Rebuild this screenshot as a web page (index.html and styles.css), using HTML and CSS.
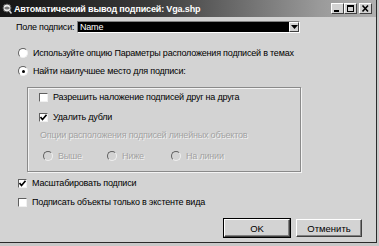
FILE: index.html
```html
<!DOCTYPE html>
<html lang="ru">
<head>
  <meta charset="UTF-8">
  <title>Автоматический вывод подписей: Vga.shp</title>
  <link rel="stylesheet" href="styles.css">
</head>
<body>

  <div class="window">
    <!-- title bar -->
    <div class="titlebar">
      <svg class="app-icon" width="10" height="11" viewBox="0 0 10 11">
        <circle cx="5" cy="5" r="4" fill="#e8e8e8" stroke="#555" stroke-width="1"/>
        <path d="M2 5 Q5 2 8 5 Q5 8 2 5" fill="#777"/>
        <line x1="7.5" y1="8" x2="9.5" y2="10.5" stroke="#ddd" stroke-width="1.5"/>
      </svg>
      <span class="title">Автоматический вывод подписей: Vga.shp</span>
      <div class="caption-btns">
        <span class="cap-btn"><svg width="11" height="9" viewBox="0 0 11 9"><rect x="2" y="6" width="5" height="2" fill="#000"/></svg></span>
        <span class="cap-btn"><svg width="11" height="9" viewBox="0 0 11 9"><rect x="2.5" y="1.5" width="6" height="6" fill="none" stroke="#000"/><rect x="2" y="1" width="7" height="2" fill="#000"/></svg></span>
        <span class="cap-btn close"><svg width="11" height="9" viewBox="0 0 11 9"><path d="M2.5 1.5 L8 7.5 M8 1.5 L2.5 7.5" stroke="#000" stroke-width="1.6"/></svg></span>
      </div>
    </div>

    <div class="content">
      <div class="field-row">
        <span class="field-label">Поле подписи:</span>
        <div class="combo">
          <span class="combo-value">Name</span>
          <span class="combo-arrow"><svg width="7" height="4" viewBox="0 0 7 4"><path d="M0 0 H7 L3.5 4 Z" fill="#000"/></svg></span>
        </div>
      </div>

      <div class="row radio-row first">
        <span class="radio"></span>
        <span>Используйте опцию Параметры расположения подписей в темах</span>
      </div>
      <div class="row radio-row second">
        <span class="radio on"></span>
        <span>Найти наилучшее место для подписи:</span>
      </div>

      <div class="group">
        <div class="row">
          <span class="check"></span>
          <span>Разрешить наложение подписей друг на друга</span>
        </div>
        <div class="row gap8">
          <span class="check on"><svg width="7" height="7" viewBox="0 0 7 7"><path d="M0.5 3 L2.5 5.5 L6.5 0.8" fill="none" stroke="#000" stroke-width="1.6"/></svg></span>
          <span>Удалить дубли</span>
        </div>
        <div class="row gap6 disabled sub-label">Опции расположения подписей линейных объектов</div>
        <div class="row gap9 disabled radio-set">
          <div class="opt"><span class="radio dim"></span><span>Выше</span></div>
          <div class="opt"><span class="radio dim"></span><span>Ниже</span></div>
          <div class="opt"><span class="radio dim"></span><span>На линии</span></div>
        </div>
      </div>

      <div class="row outer gap5">
        <span class="check on"><svg width="7" height="7" viewBox="0 0 7 7"><path d="M0.5 3 L2.5 5.5 L6.5 0.8" fill="none" stroke="#000" stroke-width="1.6"/></svg></span>
        <span>Масштабировать подписи</span>
      </div>
      <div class="row outer gap7">
        <span class="check"></span>
        <span>Подписать объекты только в экстенте вида</span>
      </div>

      <div class="buttons">
        <button class="btn default">OK</button>
        <button class="btn">Отменить</button>
      </div>
    </div>
  </div>

</body>
</html>
```

FILE: styles.css
```css
body {
  margin: 0;
  background: #c8c8c8;
  font-family: "Liberation Sans", Arial, sans-serif;
  font-size: 9px;
  letter-spacing: -0.2px;
  color: #000;
}
.window {
  width: 377px;
  height: 243px;
  background: #d3d3d3;
  border-right: 1px solid #2a2a2a;
  border-bottom: 1px solid #2a2a2a;
  box-sizing: border-box;
  display: flex;
  flex-direction: column;
}
.titlebar {
  height: 17px;
  display: flex;
  align-items: center;
  background: linear-gradient(to right, #141414 0%, #3a3a3a 40%, #9a9a9a 85%, #b0b0b0 100%);
  padding-left: 2px;
}
.app-icon {
  margin-right: 2px;
}
.title {
  color: #fff;
  font-weight: bold;
  font-size: 9px;
  letter-spacing: -0.15px;
  flex: 1;
}
.caption-btns {
  display: flex;
  margin-right: 4px;
}
.cap-btn {
  width: 13px;
  height: 11px;
  background: #d3d3d3;
  border: 1px solid;
  border-color: #fff #404040 #404040 #fff;
  box-sizing: border-box;
  display: flex;
  align-items: center;
  justify-content: center;
}
.cap-btn.close {
  margin-left: 2px;
}
.content {
  flex: 1;
  display: flex;
  flex-direction: column;
  padding-left: 16px;
}
.field-row {
  display: flex;
  align-items: center;
  margin-top: 4px;
  height: 12px;
  white-space: nowrap;
}
.field-label {
  width: 61px;
  flex-shrink: 0;
}
.combo {
  width: 223px;
  height: 12px;
  background: #000;
  display: flex;
  align-items: center;
  border: 1px solid;
  border-color: #808080 #fff #fff #808080;
  box-sizing: border-box;
}
.combo-value {
  color: #fff;
  flex: 1;
  padding-left: 2px;
}
.combo-arrow {
  width: 10px;
  height: 10px;
  background: #d3d3d3;
  border: 1px solid;
  border-color: #fff #404040 #404040 #fff;
  box-sizing: border-box;
  display: flex;
  align-items: center;
  justify-content: center;
}
.row {
  display: flex;
  align-items: center;
  height: 12px;
  white-space: nowrap;
}
.radio-row {
  padding-left: 2px;
}
.radio-row.first {
  margin-top: 14px;
}
.radio-row.second {
  margin-top: 6px;
}
.radio {
  width: 8px;
  height: 8px;
  border-radius: 50%;
  background: #fff;
  border: 1px solid;
  border-color: #606060 #f0f0f0 #f0f0f0 #606060;
  margin-right: 5px;
  position: relative;
}
.radio.on::after {
  content: "";
  position: absolute;
  left: 2.5px;
  top: 2.5px;
  width: 3px;
  height: 3px;
  border-radius: 50%;
  background: #000;
}
.radio.dim {
  background: #d3d3d3;
}
.check {
  width: 9px;
  height: 9px;
  background: #fff;
  border: 1px solid;
  border-color: #606060 #f0f0f0 #f0f0f0 #606060;
  box-sizing: border-box;
  margin-right: 5px;
  display: flex;
  align-items: center;
  justify-content: center;
}
.group {
  margin-top: 10px;
  margin-left: 11px;
  width: 274px;
  height: 85px;
  box-sizing: border-box;
  border: 1px solid #8a8a8a;
  box-shadow: 1px 1px 0 #f4f4f4, inset 1px 1px 0 #f4f4f4;
  padding: 3px 0 0 11px;
  display: flex;
  flex-direction: column;
}
.gap5 { margin-top: 5px; }
.gap6 { margin-top: 6px; }
.gap7 { margin-top: 7px; }
.gap8 { margin-top: 8px; }
.gap9 { margin-top: 9px; }
.disabled {
  color: #a2a2a2;
  text-shadow: 1px 1px 0 #f2f2f2;
}
.sub-label {
  padding-left: 1px;
}
.radio-set {
  padding-left: 4px;
}
.opt {
  display: flex;
  align-items: center;
  width: 64px;
}
.outer {
  padding-left: 2px;
}
.buttons {
  display: flex;
  justify-content: flex-end;
  gap: 6px;
  margin-top: 11px;
  margin-right: 14px;
}
.btn {
  width: 66px;
  height: 18px;
  font-family: "Liberation Sans", Arial, sans-serif;
  font-size: 9.5px;
  background: #d3d3d3;
  border: 1px solid;
  border-color: #fff #404040 #404040 #fff;
  box-shadow: inset -1px -1px 0 #808080;
  padding: 0;
}
.btn.default {
  outline: 1px solid #000;
}
```
